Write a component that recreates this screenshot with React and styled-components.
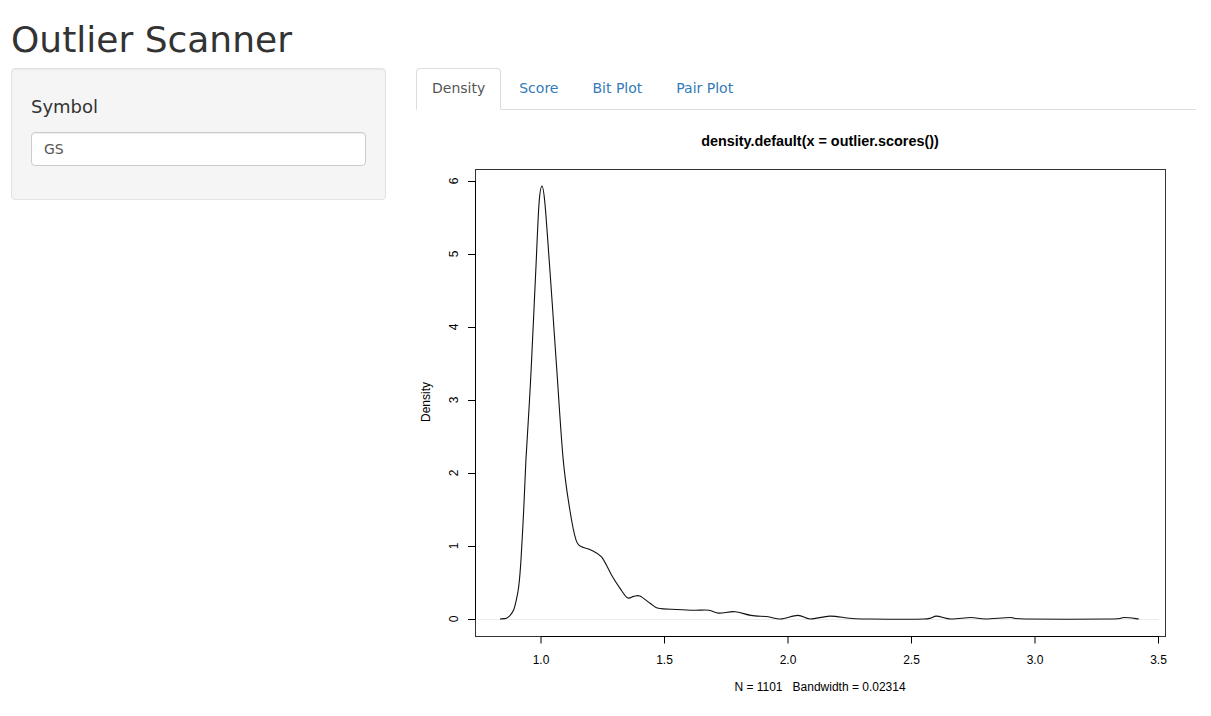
import React from 'react';
import styled, { createGlobalStyle } from 'styled-components';

const GlobalStyle = createGlobalStyle`
  html, body {
    margin: 0;
    padding: 0;
    background: #ffffff;
    overflow: hidden;
  }
  body {
    font-family: "DejaVu Sans", "Liberation Sans", sans-serif;
    font-size: 14px;
    color: #333333;
  }
`;

const Page = styled.div({
  padding: '0 15px 0 11px',
});

const Title = styled.h2({
  margin: '20px 0 8px 0',
  fontSize: '36px',
  lineHeight: '40px',
  fontWeight: 400,
  color: '#333333',
});

const Row = styled.div({
  display: 'grid',
  gridTemplateColumns: '375px 780px',
  columnGap: '30px',
  alignItems: 'start',
});

const Well = styled.div({
  background: '#f5f5f5',
  border: '1px solid #e3e3e3',
  borderRadius: '4px',
  padding: '19px',
  boxShadow: 'inset 0 1px 1px rgba(0,0,0,.05)',
});

const Label = styled.label({
  display: 'block',
  margin: '9px 0 15px 0',
  fontSize: '18px',
  lineHeight: '20px',
  color: '#333333',
});

const TextInput = styled.input({
  display: 'block',
  boxSizing: 'border-box',
  width: '100%',
  height: '34px',
  margin: '0 0 14px 0',
  padding: '6px 12px',
  fontFamily: '"DejaVu Sans", sans-serif',
  fontSize: '14px',
  color: '#555555',
  background: '#ffffff',
  border: '1px solid #cccccc',
  borderRadius: '4px',
  boxShadow: 'inset 0 1px 1px rgba(0,0,0,.075)',
  outline: 'none',
});

const Main = styled.div({
  display: 'flex',
  flexDirection: 'column',
});

const Tabs = styled.ul({
  display: 'flex',
  margin: 0,
  padding: 0,
  listStyle: 'none',
  borderBottom: '1px solid #dddddd',
});

const Tab = styled.li(({ active }) => ({
  marginRight: '2px',
  marginBottom: '-1px',
  padding: '9px 15px 11px',
  lineHeight: '20px',
  fontSize: '14px',
  border: '1px solid',
  borderColor: active ? '#dddddd #dddddd transparent' : 'transparent',
  borderRadius: '4px 4px 0 0',
  background: active ? '#ffffff' : 'transparent',
  color: active ? '#555555' : '#337ab7',
  cursor: 'pointer',
}));

const Plot = styled.svg({
  display: 'block',
  width: '780px',
  height: '606px',
});

const PlotText = styled.text(({ bold, size }) => ({
  fontFamily: '"Liberation Sans", Arial, sans-serif',
  fontSize: `${size || 12}px`,
  fontWeight: bold ? 700 : 400,
  fill: '#000000',
}));

const X0 = 541;
const XS = 247;
const Y0 = 619;
const YS = 73;
const px = (v) => X0 + (v - 1) * XS;
const py = (d) => Y0 - d * YS;

const density = [
  [0.834, 0], [0.86, 0.01], [0.875, 0.05], [0.89, 0.13], [0.9, 0.26],
  [0.91, 0.45], [0.919, 0.81], [0.93, 1.5], [0.939, 2.18], [0.95, 2.8],
  [0.96, 3.41], [0.979, 4.78], [0.992, 5.69], [1.004, 5.93],
  [1.016, 5.69], [1.036, 4.78], [1.05, 4.1], [1.064, 3.41],
  [1.09, 2.18], [1.117, 1.49], [1.142, 1.08], [1.165, 0.99], [1.2, 0.95],
  [1.245, 0.85], [1.286, 0.6], [1.32, 0.42], [1.35, 0.29], [1.375, 0.31],
  [1.4, 0.315], [1.44, 0.22], [1.475, 0.146], [1.55, 0.13], [1.62, 0.12],
  [1.68, 0.12], [1.72, 0.08], [1.785, 0.1], [1.85, 0.05], [1.92, 0.03],
  [1.97, 0.0], [2.04, 0.05], [2.09, 0.0], [2.17, 0.04], [2.25, 0.01],
  [2.32, 0.0], [2.55, 0.0], [2.6, 0.04], [2.66, 0.0], [2.74, 0.02],
  [2.8, 0.0], [2.9, 0.02], [2.96, 0.0], [3.3, 0.0], [3.36, 0.02], [3.42, 0.0],
];

// catmull-rom through the points, so the line looks like R's smooth curve
const curvePath = (points) => {
  const p = points.map(([x, y]) => [px(x), py(y)]);
  let d = `M${p[0][0]},${p[0][1]}`;
  for (let i = 0; i < p.length - 1; i++) {
    const a = p[i - 1] || p[i];
    const b = p[i];
    const c = p[i + 1];
    const e = p[i + 2] || c;
    const c1 = [b[0] + (c[0] - a[0]) / 6, b[1] + (c[1] - a[1]) / 6];
    const c2 = [c[0] - (e[0] - b[0]) / 6, c[1] - (e[1] - b[1]) / 6];
    d += ` C${c1[0].toFixed(2)},${c1[1].toFixed(2)} ${c2[0].toFixed(2)},${c2[1].toFixed(2)} ${c[0].toFixed(2)},${c[1].toFixed(2)}`;
  }
  return d;
};

const xTicks = [1.0, 1.5, 2.0, 2.5, 3.0, 3.5];
const yTicks = [0, 1, 2, 3, 4, 5, 6];

const DensityPlot = () => (
  <Plot viewBox="416 110 780 606">
    <PlotText x={820} y={146} bold size={14.4} textAnchor="middle">
      density.default(x = outlier.scores())
    </PlotText>

    <line x1={px(0.75)} x2={px(3.5)} y1={Y0 + 0.5} y2={Y0 + 0.5} stroke="#ececec" />

    <rect x={475.5} y={169.5} width={690} height={467} fill="none" stroke="#333" />

    <line x1={475.5} x2={475.5} y1={py(6)} y2={py(0)} stroke="#000" />
    {yTicks.map((t) => (
      <g key={t}>
        <line x1={468} x2={475.5} y1={py(t) + 0.5} y2={py(t) + 0.5} stroke="#000" />
        <PlotText
          x={458}
          y={py(t)}
          textAnchor="middle"
          transform={`rotate(-90 458 ${py(t)})`}
        >
          {t}
        </PlotText>
      </g>
    ))}

    <line x1={px(1)} x2={px(3.5)} y1={636.5} y2={636.5} stroke="#000" />
    {xTicks.map((t) => (
      <g key={t}>
        <line x1={px(t)} x2={px(t)} y1={636.5} y2={643.5} stroke="#000" />
        <PlotText x={px(t)} y={663.5} textAnchor="middle">
          {t.toFixed(1)}
        </PlotText>
      </g>
    ))}

    <PlotText x={820} y={691} textAnchor="middle">
      {'N = 1101\u00a0\u00a0 Bandwidth = 0.02314'}
    </PlotText>
    <PlotText x={429.5} y={402} textAnchor="middle" transform="rotate(-90 429.5 402)">
      Density
    </PlotText>

    <path d={curvePath(density)} fill="none" stroke="#111" strokeWidth={1.1} />
  </Plot>
);

const tabs = ['Density', 'Score', 'Bit Plot', 'Pair Plot'];

const App = () => (
  <>
    <GlobalStyle />
    <Page>
      <Title>Outlier Scanner</Title>
      <Row>
        <Well>
          <Label htmlFor="symbol">Symbol</Label>
          <TextInput id="symbol" defaultValue="GS" />
        </Well>
        <Main>
          <Tabs>
            {tabs.map((t) => (
              <Tab key={t} active={t === 'Density'}>
                {t}
              </Tab>
            ))}
          </Tabs>
          <DensityPlot />
        </Main>
      </Row>
    </Page>
  </>
);

export default App;
